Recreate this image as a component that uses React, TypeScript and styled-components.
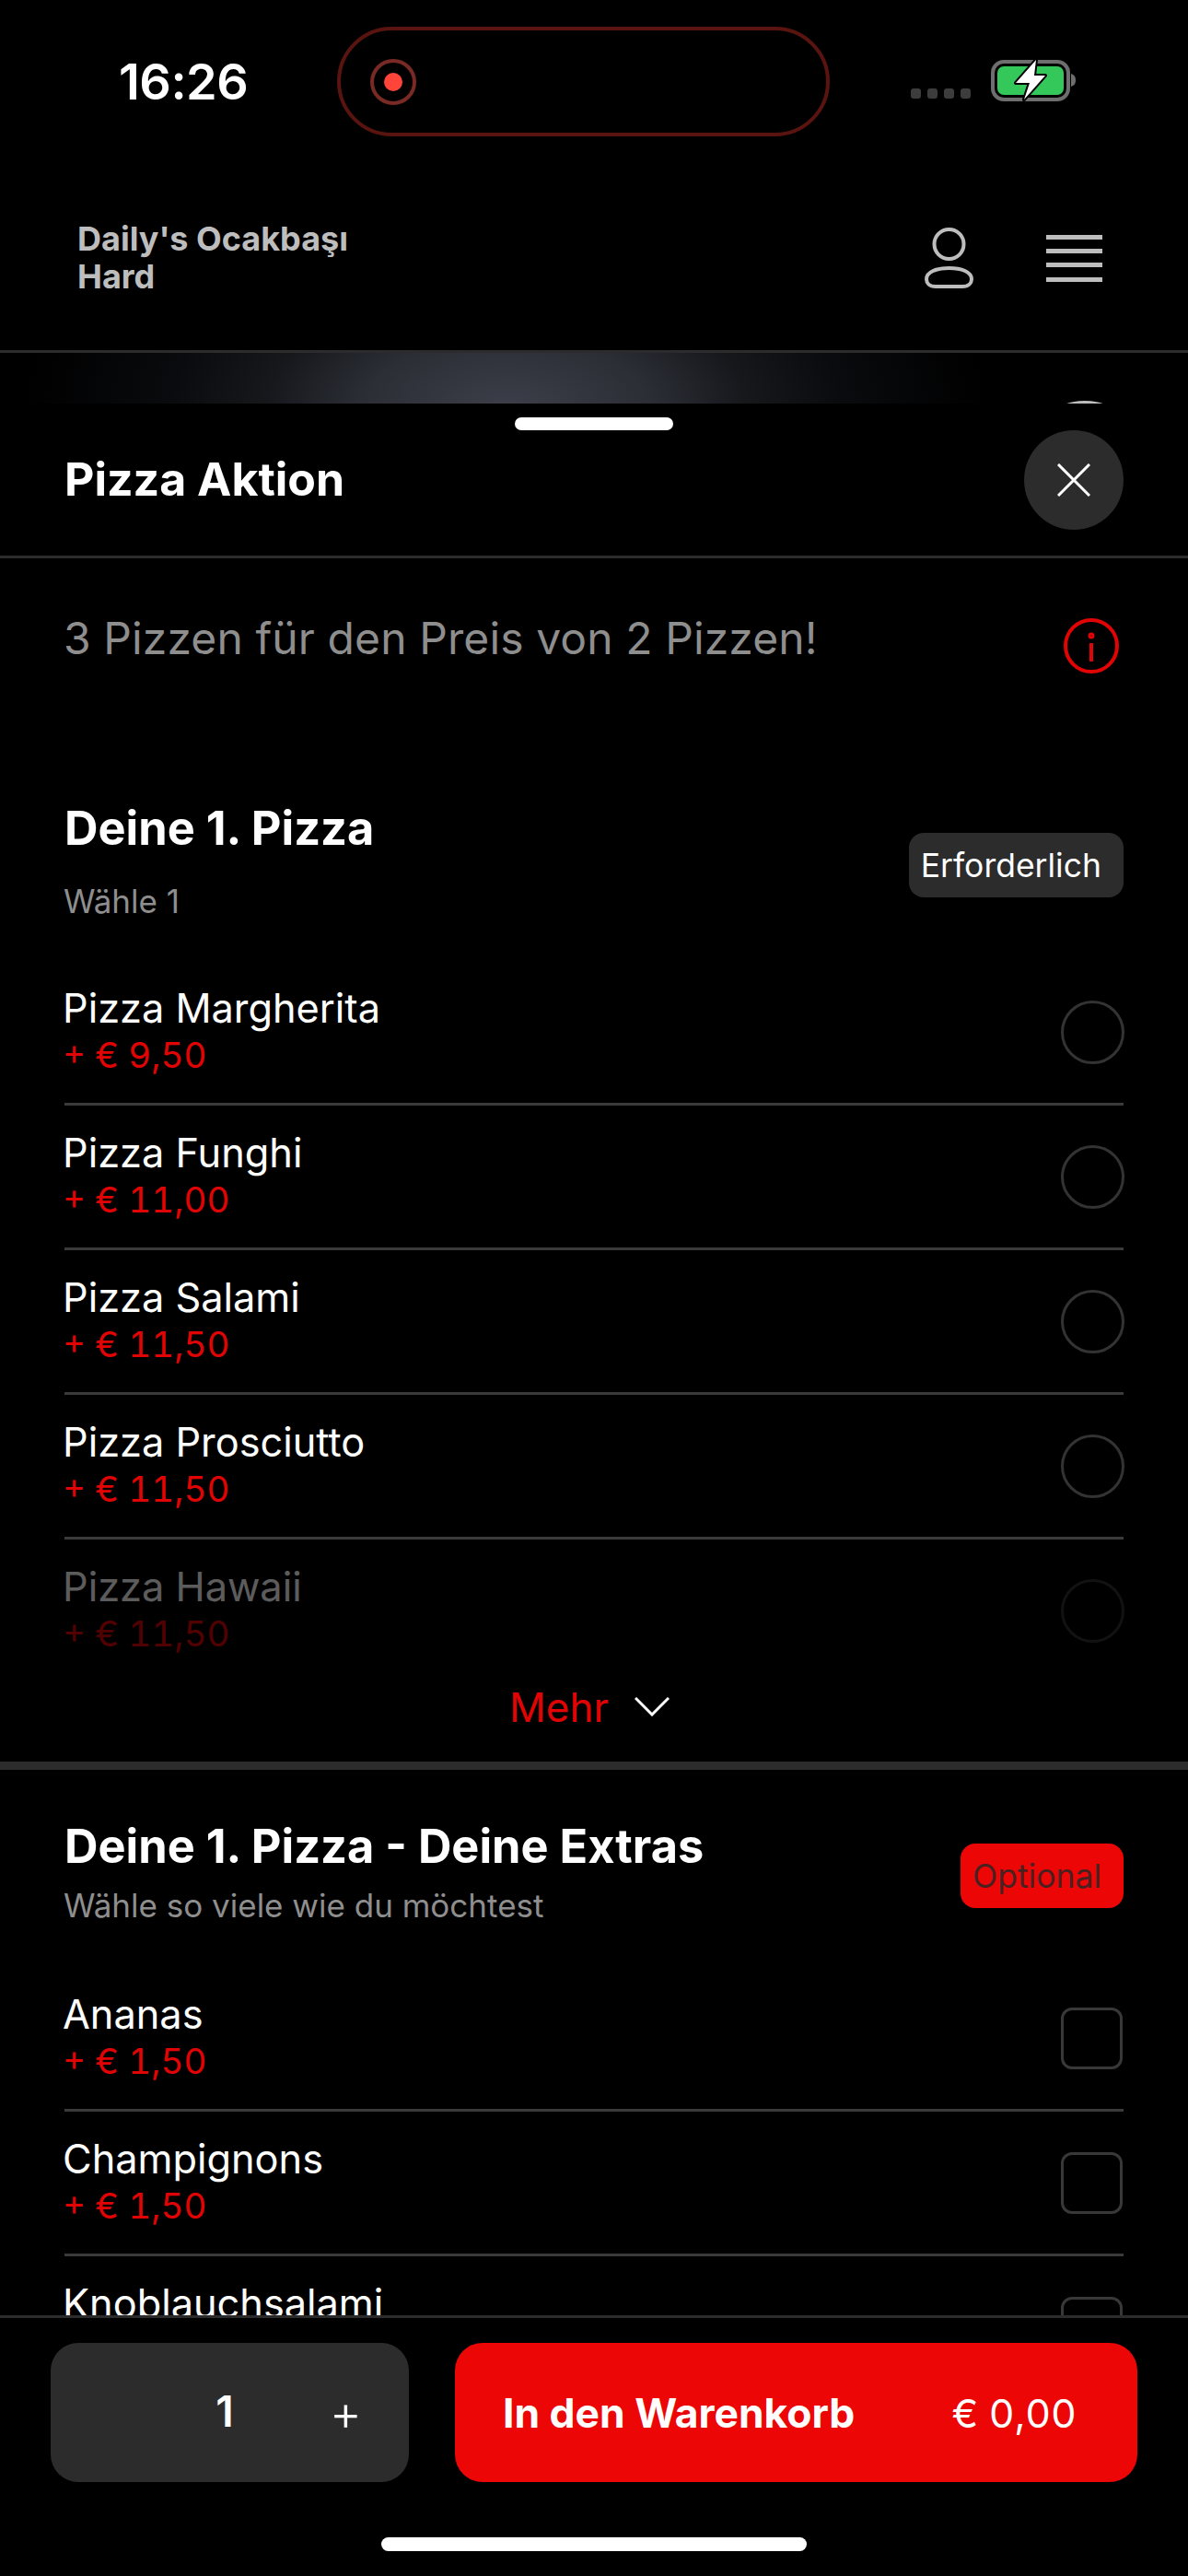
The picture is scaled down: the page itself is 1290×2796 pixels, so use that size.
import React from "react";
import styled, { createGlobalStyle } from "styled-components";

const GlobalStyle = createGlobalStyle`
  html, body {
    margin: 0;
    padding: 0;
    background: #000000;
  }
  * {
    box-sizing: border-box;
  }
  body {
    font-family: Inter, "Noto Sans", "Liberation Sans", sans-serif;
  }
`;

const Page = styled.div`
  width: 1290px;
  height: 2796px;
  display: flex;
  flex-direction: column;
  overflow: hidden;
  background: #000000;
  color: #ffffff;
`;

const StatusBar = styled.div`
  height: 148px;
  padding: 29px 0 0 129px;
  display: flex;
  align-items: center;
`;

const Time = styled.div`
  width: 237px;
  font-size: 54px;
  font-weight: 600;
  line-height: 64px;
  letter-spacing: -0.5px;
`;

const RecordPill = styled.div`
  width: 535px;
  height: 119px;
  padding-left: 32px;
  display: flex;
  align-items: center;
  border: 4px solid #5a1410;
  border-radius: 60px;
`;

const RecordRing = styled.div`
  width: 50px;
  height: 50px;
  display: flex;
  align-items: center;
  justify-content: center;
  border: 4px solid #7a2a24;
  border-radius: 50%;
  &::after {
    content: "";
    width: 20px;
    height: 20px;
    border-radius: 50%;
    background: #ff453a;
  }
`;

const SignalDots = styled.div`
  margin: 26px 0 0 88px;
  display: flex;
  gap: 7px;
`;

const SignalDot = styled.span`
  width: 11px;
  height: 11px;
  border-radius: 3px;
  background: #3c3c3c;
`;

const BatteryIcon = styled.svg`
  margin: -5px 0 0 22px;
`;

const Header = styled.header`
  height: 235px;
  padding: 32px 93px 0 84px;
  display: flex;
  align-items: center;
  justify-content: space-between;
  border-bottom: 3px solid #2c2c2c;
`;

const ShopName = styled.div`
  font-size: 36px;
  font-weight: 700;
  line-height: 41px;
  color: #bdbdbd;
`;

const HeaderIcons = styled.div`
  display: flex;
  align-items: center;
  gap: 79px;
`;

const HeroStrip = styled.div`
  height: 55px;
  padding-right: 46px;
  display: flex;
  justify-content: flex-end;
  overflow: hidden;
  background: radial-gradient(
    ellipse 520px 260px at 550px 60px,
    #3c3f49 0%,
    #2c2e36 30%,
    #16181c 50%,
    #0a0b0e 70%,
    #000000 100%
  );
  &::after {
    content: "";
    width: 132px;
    height: 132px;
    flex-shrink: 0;
    margin-top: 52px;
    border-radius: 50%;
    background: #bdbdbd;
  }
`;

const Sheet = styled.section`
  flex: 1;
  min-height: 0;
  display: flex;
  flex-direction: column;
  background: #000000;
`;

const Handle = styled.div`
  width: 172px;
  height: 14px;
  margin: 15px auto 0;
  border-radius: 7px;
  background: #ffffff;
`;

const SheetHead = styled.div`
  height: 139px;
  padding: 0 70px 28px;
  display: flex;
  align-items: center;
  justify-content: space-between;
  border-bottom: 3px solid #2c2c2c;
`;

const SheetTitle = styled.h1`
  margin: -3px 0 0;
  font-size: 50px;
  font-weight: 700;
  line-height: 60px;
`;

const CloseButton = styled.button`
  width: 108px;
  height: 108px;
  padding: 0;
  display: flex;
  align-items: center;
  justify-content: center;
  border: none;
  border-radius: 50%;
  background: #2c2c2c;
`;

const Scroller = styled.div`
  flex: 1;
  min-height: 0;
  overflow: hidden;
`;

const Intro = styled.div`
  height: 263px;
  padding: 57px 75px 0 69px;
  display: flex;
  align-items: flex-start;
  justify-content: space-between;
`;

const IntroText = styled.p`
  margin: 0;
  font-size: 48px;
  font-weight: 400;
  line-height: 60px;
  letter-spacing: 0.1px;
  color: #8e8e8e;
`;

const InfoIcon = styled.svg`
  margin-top: 8px;
`;

const Section = styled.div<{ $top: number }>`
  padding: ${(p) => p.$top}px 70px 0;
`;

const SectionHead = styled.div<{ $bottom: number }>`
  padding-bottom: ${(p) => p.$bottom}px;
  display: flex;
  align-items: flex-start;
  justify-content: space-between;
`;

const SectionTitle = styled.h2`
  margin: 0;
  font-size: 50.5px;
  font-weight: 700;
  line-height: 60px;
`;

const SectionHint = styled.div<{ $gap: number }>`
  margin: ${(p) => p.$gap}px 0 0 -1px;
  font-size: 35px;
  line-height: 44px;
  color: #8e8e8e;
`;

const Badge = styled.div<{ $active?: boolean; $top: number }>`
  height: 70px;
  margin-top: ${(p) => p.$top}px;
  padding: 0 24px 0 13px;
  display: flex;
  align-items: center;
  border-radius: 16px;
  font-size: 35.5px;
  background: ${(p) => (p.$active ? "#ec0606" : "#2c2c2c")};
  color: ${(p) => (p.$active ? "#4a2020" : "#ffffff")};
`;

// the last pizza is cut short by the "Mehr" row, so it gives back part of its height
const OptionRow = styled.div<{ $faded?: boolean }>`
  height: 157px;
  display: flex;
  align-items: center;
  justify-content: space-between;
  border-bottom: 3px solid ${(p) => (p.$faded ? "transparent" : "#3a3a3a")};
  opacity: ${(p) => (p.$faded ? 0.36 : 1)};
  margin-bottom: ${(p) => (p.$faded ? "-36px" : "0")};
`;

const OptionName = styled.div`
  margin-left: -2px;
  font-size: 43.3px;
  line-height: 51px;
  color: #ffffff;
`;

const OptionPrice = styled.div`
  margin-left: -2px;
  font-size: 38.5px;
  line-height: 51px;
  font-variant-numeric: tabular-nums;
  color: #e00404;
`;

const Radio = styled.span`
  width: 69px;
  height: 69px;
  margin-right: -1px;
  border: 3px solid #333333;
  border-radius: 50%;
`;

const CheckBox = styled.span`
  width: 67px;
  height: 67px;
  margin-right: 1px;
  border: 3px solid #383838;
  border-radius: 12px;
`;

const MoreRow = styled.div`
  height: 129px;
  padding: 1px 10px 0 0;
  display: flex;
  align-items: center;
  justify-content: center;
  gap: 28px;
  font-size: 44px;
  color: #e00404;
  border-bottom: 9px solid #2c2c2c;
`;

const Footer = styled.footer`
  height: 283px;
  flex-shrink: 0;
  padding: 27px 55px 0;
  border-top: 3px solid #2c2c2c;
`;

const FooterRow = styled.div`
  display: flex;
  gap: 50px;
`;

const QuantityBox = styled.div`
  width: 389px;
  height: 151px;
  padding-right: 51px;
  display: flex;
  align-items: center;
  justify-content: flex-end;
  gap: 104px;
  border-radius: 30px;
  background: #2c2c2c;
`;

const QuantityValue = styled.span`
  margin-top: -3px;
  font-size: 46px;
  font-weight: 600;
`;

const QuantityPlus = styled.span`
  font-size: 54px;
  font-weight: 300;
  line-height: 1;
`;

const CartButton = styled.button`
  width: 741px;
  height: 151px;
  padding: 0 66px 0 52px;
  display: flex;
  align-items: center;
  justify-content: space-between;
  border: none;
  border-radius: 30px;
  background: #ec0606;
  color: #ffffff;
  font-family: inherit;
`;

const CartLabel = styled.span`
  font-size: 44.4px;
  font-weight: 700;
`;

const CartPrice = styled.span`
  font-size: 43px;
  font-weight: 400;
  font-variant-numeric: tabular-nums;
`;

const HomeBar = styled.div`
  width: 462px;
  height: 15px;
  margin: 60px auto 0;
  border-radius: 8px;
  background: #ffffff;
`;

const pizzas = [
  { name: "Pizza Margherita", price: "+ € 9,50" },
  { name: "Pizza Funghi", price: "+ € 11,00" },
  { name: "Pizza Salami", price: "+ € 11,50" },
  { name: "Pizza Prosciutto", price: "+ € 11,50" },
  { name: "Pizza Hawaii", price: "+ € 11,50", faded: true },
];

const extras = [
  { name: "Ananas", price: "+ € 1,50" },
  { name: "Champignons", price: "+ € 1,50" },
  { name: "Knoblauchsalami", price: "+ € 1,50" },
];

const App = () => {
  return (
    <Page>
      <GlobalStyle />
      <StatusBar>
        <Time>16:26</Time>
        <RecordPill>
          <RecordRing />
        </RecordPill>
        <SignalDots>
          <SignalDot />
          <SignalDot />
          <SignalDot />
          <SignalDot />
        </SignalDots>
        <BatteryIcon width="94" height="48" viewBox="0 0 94 48">
          <rect x="2" y="5" width="82" height="41" rx="12" fill="none" stroke="#6e6e6e" strokeWidth="4" />
          <rect x="7" y="10" width="72" height="31" rx="7" fill="#34c759" />
          <path d="M87 18c3 1 5 3 5 7s-2 6-5 7z" fill="#6e6e6e" />
          <path
            d="M49 3 27 28h15l-6 18 23-26H47z"
            fill="#ffffff"
            stroke="#000000"
            strokeWidth="4"
            strokeLinejoin="round"
            paintOrder="stroke"
          />
        </BatteryIcon>
      </StatusBar>

      <Header>
        <ShopName>
          Daily's Ocakbaşı
          <br />
          Hard
        </ShopName>
        <HeaderIcons>
          <svg width="53" height="66" viewBox="0 0 53 66" fill="none" stroke="#bdbdbd" strokeWidth="4">
            <circle cx="26.5" cy="18" r="16" />
            <path d="M12 64C5 64 2 60 2 56 2 48 13 44 26.5 44S51 48 51 56C51 60 48 64 41 64Z" />
          </svg>
          <svg width="61" height="51" viewBox="0 0 61 51" fill="#bdbdbd">
            <rect y="0" width="61" height="5" />
            <rect y="15" width="61" height="5" />
            <rect y="30" width="61" height="5" />
            <rect y="46" width="61" height="5" />
          </svg>
        </HeaderIcons>
      </Header>

      <HeroStrip />

      <Sheet>
        <Handle />
        <SheetHead>
          <SheetTitle>Pizza Aktion</SheetTitle>
          <CloseButton aria-label="close">
            <svg width="36" height="36" viewBox="0 0 36 36" fill="none" stroke="#ffffff" strokeWidth="3">
              <path d="M1 1l34 34M35 1 1 35" />
            </svg>
          </CloseButton>
        </SheetHead>

        <Scroller>
          <Intro>
            <IntroText>3 Pizzen für den Preis von 2 Pizzen!</IntroText>
            <InfoIcon width="60" height="60" viewBox="0 0 60 60" fill="none" stroke="#e00404" strokeWidth="4">
              <circle cx="30" cy="30" r="28" />
              <path d="M30 27v20" />
              <circle cx="30" cy="19" r="1.5" />
            </InfoIcon>
          </Intro>

          <Section $top={0}>
            <SectionHead $bottom={43}>
              <div>
                <SectionTitle>Deine 1. Pizza</SectionTitle>
                <SectionHint $gap={27}>Wähle 1</SectionHint>
              </div>
              <Badge $top={35}>Erforderlich</Badge>
            </SectionHead>
            {pizzas.map((pizza) => (
              <OptionRow key={pizza.name} $faded={pizza.faded}>
                <div>
                  <OptionName>{pizza.name}</OptionName>
                  <OptionPrice>{pizza.price}</OptionPrice>
                </div>
                <Radio />
              </OptionRow>
            ))}
          </Section>
          <MoreRow>
            Mehr
            <svg width="38" height="21" viewBox="0 0 38 21" fill="none" stroke="#ffffff" strokeWidth="3">
              <path d="M1 1l18 18L37 1" />
            </svg>
          </MoreRow>

          <Section $top={53}>
            <SectionHead $bottom={45}>
              <div>
                <SectionTitle>Deine 1. Pizza - Deine Extras</SectionTitle>
                <SectionHint $gap={12}>Wähle so viele wie du möchtest</SectionHint>
              </div>
              <Badge $active $top={27}>
                Optional
              </Badge>
            </SectionHead>
            {extras.map((extra) => (
              <OptionRow key={extra.name}>
                <div>
                  <OptionName>{extra.name}</OptionName>
                  <OptionPrice>{extra.price}</OptionPrice>
                </div>
                <CheckBox />
              </OptionRow>
            ))}
          </Section>
        </Scroller>

        <Footer>
          <FooterRow>
            <QuantityBox>
              <QuantityValue>1</QuantityValue>
              <QuantityPlus>+</QuantityPlus>
            </QuantityBox>
            <CartButton>
              <CartLabel>In den Warenkorb</CartLabel>
              <CartPrice>€ 0,00</CartPrice>
            </CartButton>
          </FooterRow>
          <HomeBar />
        </Footer>
      </Sheet>
    </Page>
  );
};

export default App;
